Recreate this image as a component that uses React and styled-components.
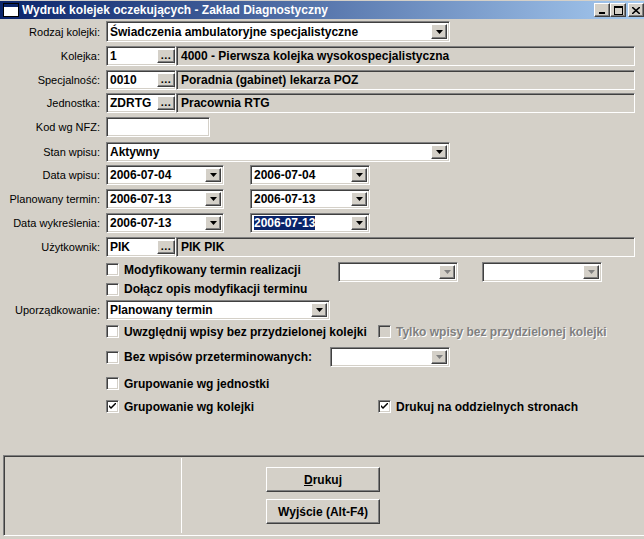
import React from "react";
import styled, { createGlobalStyle, css } from "styled-components";

const GlobalStyle = createGlobalStyle`
  html, body {
    margin: 0;
    padding: 0;
    background: #d4d0c8;
  }
  body {
    font-family: "Liberation Sans", "DejaVu Sans", Arial, sans-serif;
    font-size: 11px;
    color: #000;
  }
  #root {
    width: 644px;
    height: 539px;
    overflow: hidden;
  }
`;

const sunken = css`
  box-sizing: border-box;
  border: 1px solid;
  border-color: #808080 #ffffff #ffffff #808080;
  box-shadow: inset 1px 1px #404040, inset -1px -1px #d4d0c8;
`;

const raised = css`
  box-sizing: border-box;
  border: 1px solid;
  border-color: #ffffff #404040 #404040 #ffffff;
  box-shadow: inset -1px -1px #808080;
  background: #d4d0c8;
`;

// pogrubiony tekst kontrolek (Tahoma Bold 8pt jest szerszy)
const boldText = css`
  font-weight: bold;
  font-size: 12px;
`;

const Window = styled.div`
  width: 644px;
  height: 539px;
  display: flex;
  flex-direction: column;
  background: #d4d0c8;
  overflow: hidden;
`;

const TitleBar = styled.div`
  height: 18px;
  margin-top: 1px;
  display: flex;
  align-items: center;
  padding-left: 3px;
  background: linear-gradient(to right, #0a246a, #a6caf0);
  color: #fff;
  font-weight: bold;
  font-size: 12px;
`;

const TitleText = styled.span`
  margin-left: 3px;
  flex: 1;
  white-space: nowrap;
`;

const TitleButtons = styled.div`
  display: flex;
  align-items: center;
`;

const TitleButton = styled.div`
  ${raised};
  width: 16px;
  height: 14px;
  display: flex;
  align-items: center;
  justify-content: center;
  margin-left: ${(p) => (p.$gap ? "2px" : "0")};
`;

const Form = styled.div`
  display: flex;
  flex-direction: column;
`;

const Row = styled.div`
  display: flex;
  align-items: ${(p) => p.$align || "center"};
  height: ${(p) => p.$h}px;
  margin-top: ${(p) => p.$mt}px;
`;

const Label = styled.div`
  box-sizing: border-box;
  width: 106px;
  flex: none;
  padding-right: 6px;
  text-align: right;
  white-space: nowrap;
`;

const ComboBox = styled.div`
  ${sunken};
  width: ${(p) => p.$w}px;
  height: 100%;
  flex: none;
  display: flex;
  align-items: stretch;
  padding: 2px;
  background: #fff;
  margin-left: ${(p) => p.$ml || 0}px;
`;

const ComboText = styled.div`
  ${boldText};
  flex: 1;
  display: flex;
  align-items: center;
  padding-left: 1px;
  white-space: nowrap;
  overflow: hidden;
`;

const Selected = styled.span`
  background: #0a246a;
  color: #fff;
`;

const DropButton = styled.div`
  ${raised};
  width: 16px;
  flex: none;
  display: flex;
  align-items: center;
  justify-content: center;
`;

const LookupFrame = styled.div`
  ${sunken};
  width: 70px;
  height: 100%;
  flex: none;
  display: flex;
  padding: 2px 0 2px 2px;
  background: #fff;
`;

const LookupInput = styled.div`
  ${boldText};
  flex: 1;
  display: flex;
  align-items: center;
  padding-left: 1px;
`;

const DotsButton = styled.div`
  ${raised};
  width: 18px;
  flex: none;
  display: flex;
  align-items: center;
  justify-content: center;
  font-weight: bold;
  letter-spacing: 0.5px;
  padding-bottom: 3px;
`;

const LabelBox = styled.div`
  ${sunken};
  ${boldText};
  width: 459px;
  height: 100%;
  display: flex;
  align-items: center;
  padding-left: 4px;
  white-space: nowrap;
`;

const TextBox = styled.div`
  ${sunken};
  width: ${(p) => p.$w}px;
  height: 100%;
  background: #fff;
`;

const CheckCell = styled.label`
  ${boldText};
  display: flex;
  align-items: center;
  width: ${(p) => (p.$w ? `${p.$w}px` : "auto")};
  flex: none;
  height: 15px;
  white-space: nowrap;
  color: ${(p) => (p.$disabled ? "#808080" : "#000")};
  text-shadow: ${(p) => (p.$disabled ? "1px 1px #ffffff" : "none")};
`;

const CheckBox = styled.span`
  ${sunken};
  width: 13px;
  height: 13px;
  flex: none;
  background: ${(p) => (p.$disabled ? "#d4d0c8" : "#fff")};
  display: flex;
  align-items: center;
  justify-content: center;
  margin-right: 5px;
`;

const Panel = styled.div`
  margin: auto -3px 3px 3px;
  height: 81px;
  box-sizing: border-box;
  border: 1px solid;
  border-color: #808080 #ffffff #ffffff #808080;
  box-shadow: inset 1px 1px #404040, inset -1px -1px #d4d0c8;
  padding: 2px;
  display: flex;
`;

const PanelLeft = styled.div`
  width: 175px;
  flex: none;
  border-right: 1px solid #ffffff;
`;

const PanelRight = styled.div`
  flex: 1;
  display: flex;
  flex-direction: column;
  gap: 7px;
  padding: 9px 0 0 84px;
`;

const Button = styled.div`
  ${raised};
  ${boldText};
  width: 114px;
  height: 25px;
  display: flex;
  align-items: center;
  justify-content: center;
`;

const Arrow = ({ disabled }) => (
  <svg width="7" height="4" viewBox="0 0 7 4">
    <path d="M0 0H7L3.5 4Z" fill={disabled ? "#808080" : "#000"} />
  </svg>
);

const Combo = ({ value, w, ml, disabled, selected }) => (
  <ComboBox $w={w} $ml={ml}>
    <ComboText>{selected ? <Selected>{value}</Selected> : value}</ComboText>
    <DropButton>
      <Arrow disabled={disabled} />
    </DropButton>
  </ComboBox>
);

const Lookup = ({ code, text }) => (
  <>
    <LookupFrame>
      <LookupInput>{code}</LookupInput>
      <DotsButton>...</DotsButton>
    </LookupFrame>
    <LabelBox>{text}</LabelBox>
  </>
);

const Check = ({ label, checked, disabled, w }) => (
  <CheckCell $w={w} $disabled={disabled}>
    <CheckBox $disabled={disabled}>
      {checked && (
        <svg width="7" height="7" viewBox="0 0 7 7">
          <path d="M0 2V4L2 6L7 1V-1L2 4Z" fill="#000" />
        </svg>
      )}
    </CheckBox>
    {label}
  </CheckCell>
);

const WindowIcon = () => (
  <svg width="16" height="14" viewBox="0 0 16 14">
    <rect x="0.5" y="0.5" width="15" height="13" fill="#fff" stroke="#000" />
    <rect x="1" y="1" width="14" height="3" fill="#0a246a" />
  </svg>
);

export default function App() {
  return (
    <Window>
      <GlobalStyle />
      <TitleBar>
        <WindowIcon />
        <TitleText>Wydruk kolejek oczekujących - Zakład Diagnostyczny</TitleText>
        <TitleButtons>
          <TitleButton>
            <svg width="8" height="7" viewBox="0 0 8 7">
              <rect x="1" y="5" width="6" height="2" fill="#000" />
            </svg>
          </TitleButton>
          <TitleButton>
            <svg width="9" height="9" viewBox="0 0 9 9">
              <rect x="0.5" y="0.5" width="8" height="8" fill="none" stroke="#000" />
              <rect x="0" y="0" width="9" height="2" fill="#000" />
            </svg>
          </TitleButton>
          <TitleButton $gap>
            <svg width="8" height="7" viewBox="0 0 8 7">
              <path d="M0 0L8 7M8 0L0 7" stroke="#000" strokeWidth="1.6" />
            </svg>
          </TitleButton>
        </TitleButtons>
      </TitleBar>

      <Form>
        <Row $mt={2} $h={21}>
          <Label>Rodzaj kolejki:</Label>
          <Combo w={344} value="Świadczenia ambulatoryjne specjalistyczne" />
        </Row>
        <Row $mt={4} $h={20}>
          <Label>Kolejka:</Label>
          <Lookup code="1" text="4000 - Pierwsza kolejka wysokospecjalistyczna" />
        </Row>
        <Row $mt={4} $h={20}>
          <Label>Specjalność:</Label>
          <Lookup code="0010" text="Poradnia (gabinet) lekarza POZ" />
        </Row>
        <Row $mt={3} $h={20}>
          <Label>Jednostka:</Label>
          <Lookup code="ZDRTG" text="Pracownia RTG" />
        </Row>
        <Row $mt={4} $h={20}>
          <Label>Kod wg NFZ:</Label>
          <TextBox $w={104} />
        </Row>
        <Row $mt={5} $h={20}>
          <Label>Stan wpisu:</Label>
          <Combo w={344} value="Aktywny" />
        </Row>
        <Row $mt={3} $h={20}>
          <Label>Data wpisu:</Label>
          <Combo w={118} value="2006-07-04" />
          <Combo w={120} ml={26} value="2006-07-04" />
        </Row>
        <Row $mt={4} $h={20}>
          <Label>Planowany termin:</Label>
          <Combo w={118} value="2006-07-13" />
          <Combo w={120} ml={26} value="2006-07-13" />
        </Row>
        <Row $mt={4} $h={20}>
          <Label>Data wykreślenia:</Label>
          <Combo w={118} value="2006-07-13" />
          <Combo w={120} ml={26} value="2006-07-13" selected />
        </Row>
        <Row $mt={4} $h={20}>
          <Label>Użytkownik:</Label>
          <Lookup code="PIK" text="PIK PIK" />
        </Row>
        <Row $mt={5} $h={20} $align="flex-start">
          <Label />
          <Check w={232} label="Modyfikowany termin realizacji" />
          <Combo w={120} value="" disabled />
          <Combo w={120} ml={24} value="" disabled />
        </Row>
        <Row $mt={0} $h={14}>
          <Label />
          <Check label="Dołącz opis modyfikacji terminu" />
        </Row>
        <Row $mt={4} $h={20}>
          <Label>Uporządkowanie:</Label>
          <Combo w={224} value="Planowany termin" />
        </Row>
        <Row $mt={2} $h={19}>
          <Label />
          <Check w={272} label="Uwzględnij wpisy bez przydzielonej kolejki" />
          <Check disabled label="Tylko wpisy bez przydzielonej kolejki" />
        </Row>
        <Row $mt={6} $h={20}>
          <Label />
          <Check w={224} label="Bez wpisów przeterminowanych:" />
          <Combo w={120} value="" disabled />
        </Row>
        <Row $mt={7} $h={19}>
          <Label />
          <Check label="Grupowanie wg jednostki" />
        </Row>
        <Row $mt={4} $h={19}>
          <Label />
          <Check w={272} checked label="Grupowanie wg kolejki" />
          <Check checked label="Drukuj na oddzielnych stronach" />
        </Row>
      </Form>

      <Panel>
        <PanelLeft />
        <PanelRight>
          <Button>
            <u>D</u>rukuj
          </Button>
          <Button>Wyjście (Alt-F4)</Button>
        </PanelRight>
      </Panel>
    </Window>
  );
}
